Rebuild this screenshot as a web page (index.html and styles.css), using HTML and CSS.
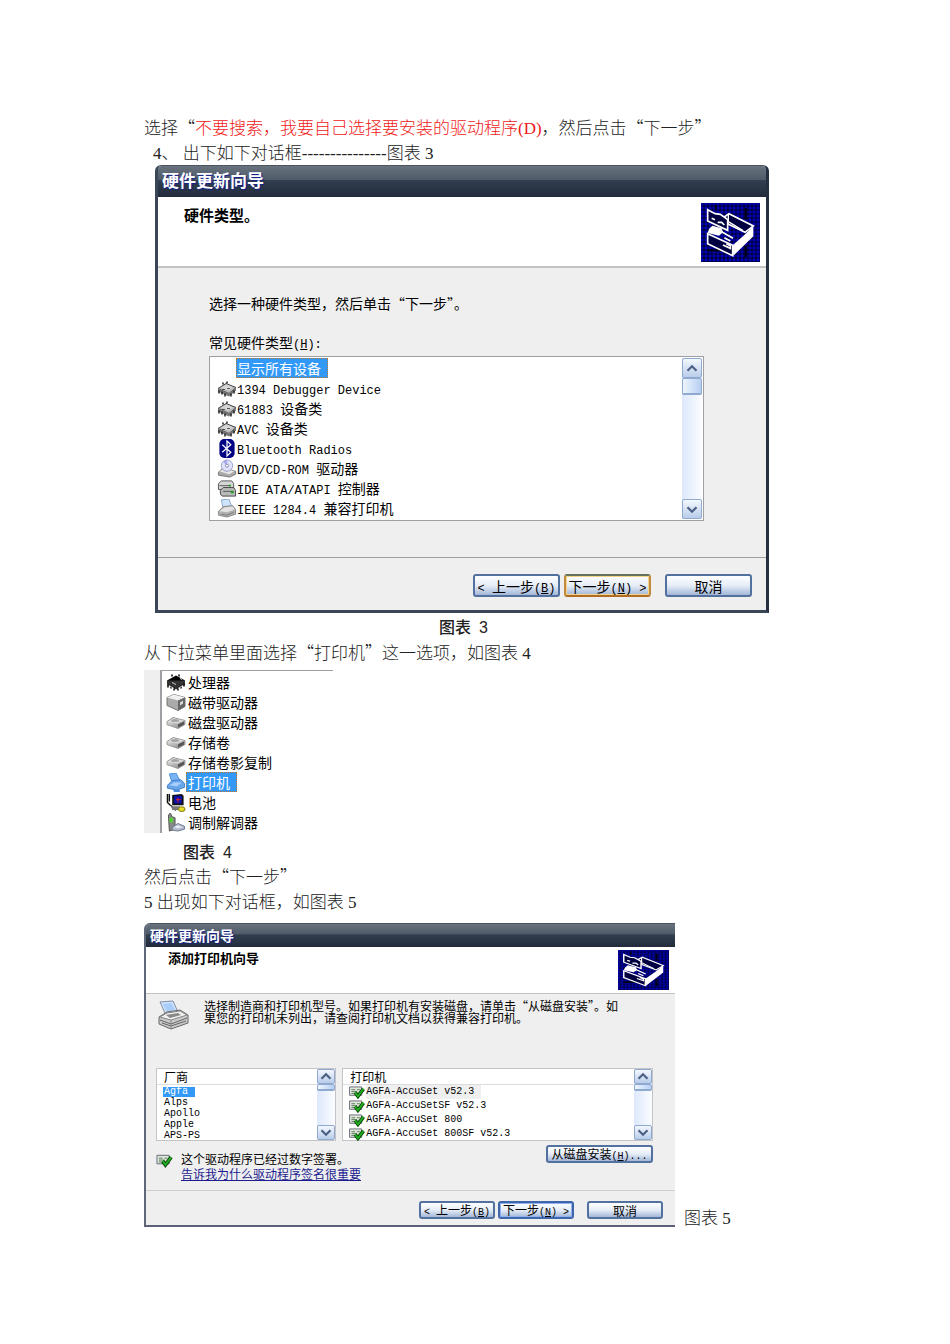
FILE: index.html
```
<!DOCTYPE html>
<html lang="zh-CN">
<head>
  <meta charset="UTF-8" />
  <meta name="viewport" content="width=device-width, initial-scale=1.0">
  <title>打印机驱动安装 – 硬件更新向导</title>
  <link rel="stylesheet" href="styles.css">
</head>
<body>

  <!-- icon sprite -->
  <svg class="sprite" aria-hidden="true">
    <defs>
      <pattern id="dots" width="12" height="12" patternUnits="userSpaceOnUse">
        <rect width="12" height="12" fill="#00007c"/>
        <rect width="6" height="6" fill="#0000b0"/>
        <rect x="6" y="6" width="6" height="6" fill="#00003c"/>
      </pattern>
      <linearGradient id="metal" x1="0" y1="0" x2="1" y2="1">
        <stop offset="0" stop-color="#f4f4f4"/>
        <stop offset="1" stop-color="#7c7c7c"/>
      </linearGradient>
    </defs>

    <symbol id="i-hardware" viewBox="0 0 177 177" preserveAspectRatio="none">
      <rect width="177" height="177" fill="url(#dots)"/>
      <path d="M134 14v36M134 128v34M44 6v12M18 142h46" stroke="#000018" stroke-width="7"/>
      <path d="M70 42 84 32 157 69 132 88 83 64Z" fill="#000040" stroke="#fff" stroke-width="5"/>
      <path d="M82 32V56L125 82" fill="none" stroke="#fff" stroke-width="4"/>
      <path d="M20 20 42 32 58 34 80 50V82L20 54Z" fill="#000040" stroke="#fff" stroke-width="5"/>
      <path d="M32 46 42 50M50 58h12l8 8" stroke="#fff" stroke-width="5" fill="none"/>
      <path d="M34 68 62 76 66 88 54 98 20 90 24 78Z" fill="#fff"/>
      <path d="M20 92 95 127V158L20 122Z" fill="#000040" stroke="#fff" stroke-width="5"/>
      <path d="M95 127 130 96 157 69V100L97 158Z" fill="#fff"/>
      <path d="M58 84 96 106M70 104 88 114M66 126 88 136V128L76 122" stroke="#fff" stroke-width="5" fill="none"/>
    </symbol>

    <symbol id="i-chip" viewBox="0 0 20 18">
      <path d="M1 9 9 4 19 8 12 14Z" fill="#bbb" stroke="#444"/>
      <path d="M4 8 10 5 16 8 11 11Z" fill="#d6d6d6"/>
      <path d="M1 9 12 14 19 8V11L12 17 1 12Z" fill="#777"/>
      <path d="M2 11v3M5 12v3M8 14v3M14 14v3M17 11v3M6 5V3M10 4V2" stroke="#222" stroke-width="1.5"/>
      <path d="M5 10h3M10 9h3" stroke="#555"/>
    </symbol>

    <symbol id="i-bluetooth" viewBox="0 0 20 20">
      <rect x="2" y="0" width="16" height="20" rx="5" fill="#000082"/>
      <path d="M5 6 14 14 10 18V2L14 6 5 14" fill="none" stroke="#fff" stroke-width="1.3"/>
    </symbol>

    <symbol id="i-dvd" viewBox="0 0 20 20">
      <path d="M1 14 6 9 19 13V16L13 19 1 17Z" fill="#aaa" stroke="#777"/>
      <path d="M2 13 7 10 18 13 12 16Z" fill="#e8e8e8"/>
      <ellipse cx="10" cy="7" rx="6" ry="6" fill="#dde2fa" stroke="#9b9fc4"/>
      <path d="M10 7 6 3 10 1Z" fill="#a5a5f0"/>
      <circle cx="10" cy="7" r="1.6" fill="#fff" stroke="#88a"/>
    </symbol>

    <symbol id="i-ide" viewBox="0 0 20 20">
      <path d="M1 5 4 2H15L17 5V11H1Z" fill="#d6d6d6" stroke="#555"/>
      <path d="M3 12 6 9H17L19 12V18H5L3 16Z" fill="#b8bab8" stroke="#444"/>
      <path d="M2 7h12M6 13h11" stroke="#555"/>
      <path d="M12 7h2M14 14h3" stroke="#1aa01a" stroke-width="2"/>
    </symbol>

    <symbol id="i-printer-s" viewBox="0 0 20 20">
      <path d="M4 1 12 0 15 8 6 10Z" fill="#cfe4fc" stroke="#8aa8cc"/>
      <path d="M1 13 6 8 16 7 19 11V16L10 19 1 17Z" fill="#b0b0b0" stroke="#888"/>
      <path d="M2 13 7 9 16 8 18 11 10 14Z" fill="#e2e2e2"/>
      <path d="M4 16 10 17 17 14" fill="none" stroke="#777"/>
    </symbol>

    <symbol id="i-printer-sel" viewBox="0 0 20 20">
      <path d="M3 1 10 0 14 8 6 11Z" fill="#79b4f4" stroke="#4b8edb"/>
      <path d="M1 13 6 8 15 7 19 11V15L11 18 1 16Z" fill="#6aa7ea" stroke="#3c7cc8"/>
      <path d="M3 13 8 10 16 10 11 14Z" fill="#a9d0fb"/>
      <path d="M7 18h7v2H8Z" fill="#4b8edb"/>
    </symbol>

    <symbol id="i-cpu" viewBox="0 0 20 18">
      <path d="M1 7 10 2 19 7 10 13Z" fill="#000"/>
      <path d="M1 7v4l9 5 9-5V7" fill="#333"/>
      <path d="M2 11v3M5 12v3M8 14v3M12 14v3M15 12v3M18 10v3M6 3V1M13 3V1" stroke="#000" stroke-width="1.5"/>
      <path d="M6 9 10 11M14 5l2 1M3 12l5 3M12 15l5-3" stroke="#ccc"/>
    </symbol>

    <symbol id="i-tape" viewBox="0 0 20 18">
      <path d="M1 4 8 1 19 4V13L12 17 1 12Z" fill="#aaa" stroke="#777"/>
      <path d="M1 4 8 1 19 4 12 7Z" fill="#efefef"/>
      <path d="M12 7 19 4V13L12 17Z" fill="#666"/>
      <path d="M14 9 17 7V10L14 12Z" fill="#ddd"/>
    </symbol>

    <symbol id="i-disk" viewBox="0 0 20 18">
      <path d="M1 8 7 4 19 7V11L12 15 1 11Z" fill="url(#metal)" stroke="#999"/>
      <path d="M2 8 8 5 18 7 11 10Z" fill="#ddd"/>
      <path d="M12 11 18 8V11L12 14Z" fill="#555"/>
      <ellipse cx="9" cy="7" rx="4" ry="1.5" fill="#a5a5a5"/>
    </symbol>

    <symbol id="i-battery" viewBox="0 0 20 20">
      <path d="M6 2 16 1 18 3V13H6Z" fill="#111"/>
      <rect x="8" y="3" width="8" height="8" fill="#0a10b0"/>
      <path d="M12 5v5M10 7h5" stroke="#e02020"/>
      <path d="M1 1v9l3 3M3 1v8M4 13c2 0 2 4 6 5" fill="none" stroke="#111" stroke-width="1.5"/>
      <path d="M5 14h9v4H6Z" fill="#777"/>
      <ellipse cx="16" cy="17" rx="3.5" ry="2.5" fill="#e6dc28" stroke="#7a7310"/>
    </symbol>

    <symbol id="i-modem" viewBox="0 0 20 20">
      <path d="M2 2 4 0 6 4 9 5V17L3 19Z" fill="#888" stroke="#555"/>
      <rect x="3" y="5" width="4" height="5" fill="#57d03a"/>
      <path d="M6 15 12 11 19 14V17L12 19 6 18Z" fill="#b4bccc" stroke="#6d7690"/>
      <path d="M8 15 12 13 17 15 12 16Z" fill="#e8edf8"/>
    </symbol>

    <symbol id="i-printer" viewBox="0 0 31 30">
      <path d="M2 2 15 1 20 12 8 15Z" fill="#cfe2fb" stroke="#7f8ea6"/>
      <path d="M5 4 13 3 17 10 9 12Z" fill="#a9cdf8"/>
      <path d="M1 17 9 12 22 10 30 15V23L13 29 1 24Z" fill="#c9c9c9" stroke="#666"/>
      <path d="M2 17 9 13 22 11 29 15 13 20Z" fill="#f2f2f2" stroke="#888"/>
      <path d="M8 15 20 13 23 15 12 18Z" fill="#888"/>
      <path d="M2 20 13 24 29 18M4 23 13 26 28 21" fill="none" stroke="#666"/>
      <path d="M13 20V28" stroke="#888"/>
    </symbol>

    <symbol id="i-signed" viewBox="0 0 18 14">
      <path d="M1 1H14V10H1Z" fill="#dfe6da" stroke="#667"/>
      <path d="M3 4h4M3 6h6M3 8h3M9 4h3" stroke="#5b7a5b"/>
      <path d="M7 7 10 11 16 3" fill="none" stroke="#0a4c0a" stroke-width="4"/>
      <path d="M7 7 10 11 16 3" fill="none" stroke="#22b022" stroke-width="2"/>
    </symbol>

    <symbol id="i-up" viewBox="0 0 10 8">
      <path d="M1 6 5 2 9 6" fill="none" stroke="#4d6185" stroke-width="2"/>
    </symbol>
    <symbol id="i-down" viewBox="0 0 10 8">
      <path d="M1 2 5 6 9 2" fill="none" stroke="#4d6185" stroke-width="2"/>
    </symbol>
  </svg>

  <main class="page">
    <p>选择“<span class="red">不要搜索，我要自己选择要安装的驱动程序<span class="latin">(D)</span></span>，然后点击“下一步”</p>
    <p class="step"><span class="latin">4</span>、<span class="latin"> </span>出下如下对话框<span class="latin">---------------</span>图表<span class="latin"> 3</span></p>

    <section class="wizard">
      <h2 class="titlebar">硬件更新向导</h2>
      <header class="banner">
        <h3>硬件类型。</h3>
        <svg class="hardware"><use href="#i-hardware"/></svg>
      </header>
      <div class="content">
        <p class="prompt">选择一种硬件类型，然后单击“下一步”。</p>
        <p class="list-label" id="typeLabel">常见硬件类型<span class="mono">(<u>H</u>):</span></p>
        <div class="listbox">
          <ul class="devices" role="listbox" aria-labelledby="typeLabel">
            <li class="selected"><span class="name">显示所有设备</span></li>
            <li><svg><use href="#i-chip"/></svg><span class="name"><span class="mono">1394 Debugger Device</span></span></li>
            <li><svg><use href="#i-chip"/></svg><span class="name"><span class="mono">61883 </span>设备类</span></li>
            <li><svg><use href="#i-chip"/></svg><span class="name"><span class="mono">AVC </span>设备类</span></li>
            <li><svg><use href="#i-bluetooth"/></svg><span class="name"><span class="mono">Bluetooth Radios</span></span></li>
            <li><svg><use href="#i-dvd"/></svg><span class="name"><span class="mono">DVD/CD-ROM </span>驱动器</span></li>
            <li><svg><use href="#i-ide"/></svg><span class="name"><span class="mono">IDE ATA/ATAPI </span>控制器</span></li>
            <li><svg><use href="#i-printer-s"/></svg><span class="name"><span class="mono">IEEE 1284.4 </span>兼容打印机</span></li>
          </ul>
          <div class="scrollbar">
            <button class="arrow" aria-label="向上"><svg><use href="#i-up"/></svg></button>
            <div class="thumb"></div>
            <button class="arrow last" aria-label="向下"><svg><use href="#i-down"/></svg></button>
          </div>
        </div>
      </div>
      <footer class="actions">
        <button class="btn"><span class="mono">&lt; </span>上一步<span class="mono">(<u>B</u>)</span></button>
        <button class="btn hot">下一步<span class="mono">(<u>N</u>) &gt;</span></button>
        <button class="btn cancel">取消</button>
      </footer>
    </section>
    <p class="caption center">图表<span class="num">3</span></p>

    <p>从下拉菜单里面选择“打印机”这一选项，如图表<span class="latin"> 4</span></p>

    <div class="excerpt">
      <ul class="devices">
        <li><svg><use href="#i-cpu"/></svg><span class="name">处理器</span></li>
        <li><svg><use href="#i-tape"/></svg><span class="name">磁带驱动器</span></li>
        <li><svg><use href="#i-disk"/></svg><span class="name">磁盘驱动器</span></li>
        <li><svg><use href="#i-disk"/></svg><span class="name">存储卷</span></li>
        <li><svg><use href="#i-disk"/></svg><span class="name">存储卷影复制</span></li>
        <li class="selected"><svg><use href="#i-printer-sel"/></svg><span class="name">打印机</span></li>
        <li><svg><use href="#i-battery"/></svg><span class="name">电池</span></li>
        <li><svg><use href="#i-modem"/></svg><span class="name">调制解调器</span></li>
      </ul>
    </div>
    <p class="caption indent">图表<span class="num">4</span></p>

    <p>然后点击“下一步”</p>
    <p><span class="latin">5 </span>出现如下对话框，如图表<span class="latin"> 5</span></p>

    <div class="figure">
      <section class="wizard small">
        <h2 class="titlebar">硬件更新向导</h2>
        <header class="banner">
          <h3>添加打印机向导</h3>
          <svg class="hardware"><use href="#i-hardware"/></svg>
        </header>
        <div class="content">
          <div class="intro">
            <svg><use href="#i-printer"/></svg>
            <p>选择制造商和打印机型号。如果打印机有安装磁盘，请单击“从磁盘安装”。如<br>果您的打印机未列出，请查阅打印机文档以获得兼容打印机。</p>
          </div>
          <div class="lists">
            <div class="listbox makers">
              <div class="column">
                <h4>厂商</h4>
                <ul>
                  <li class="selected"><span class="name">Agfa</span></li>
                  <li><span class="name">Alps</span></li>
                  <li><span class="name">Apollo</span></li>
                  <li><span class="name">Apple</span></li>
                  <li><span class="name">APS-PS</span></li>
                </ul>
              </div>
              <div class="scrollbar">
                <button class="arrow" aria-label="向上"><svg><use href="#i-up"/></svg></button>
                <div class="thumb"></div>
                <button class="arrow last" aria-label="向下"><svg><use href="#i-down"/></svg></button>
              </div>
            </div>
            <div class="listbox models">
              <div class="column">
                <h4>打印机</h4>
                <ul>
                  <li class="current"><svg><use href="#i-signed"/></svg><span class="name">AGFA-AccuSet v52.3</span></li>
                  <li><svg><use href="#i-signed"/></svg><span class="name">AGFA-AccuSetSF v52.3</span></li>
                  <li><svg><use href="#i-signed"/></svg><span class="name">AGFA-AccuSet 800</span></li>
                  <li><svg><use href="#i-signed"/></svg><span class="name">AGFA-AccuSet 800SF v52.3</span></li>
                </ul>
              </div>
              <div class="scrollbar">
                <button class="arrow" aria-label="向上"><svg><use href="#i-up"/></svg></button>
                <div class="thumb"></div>
                <button class="arrow last" aria-label="向下"><svg><use href="#i-down"/></svg></button>
              </div>
            </div>
          </div>
          <div class="signature">
            <svg><use href="#i-signed"/></svg>
            <div class="notice">
              <p>这个驱动程序已经过数字签署。</p>
              <a href="#">告诉我为什么驱动程序签名很重要</a>
            </div>
            <button class="btn disk">从磁盘安装<span class="mono">(<u>H</u>)...</span></button>
          </div>
        </div>
        <footer class="actions">
          <button class="btn"><span class="mono">&lt; </span>上一步<span class="mono">(<u>B</u>)</span></button>
          <button class="btn focus">下一步<span class="mono">(<u>N</u>) &gt;</span></button>
          <button class="btn cancel">取消</button>
        </footer>
      </section>
      <p class="side">图表<span class="latin"> 5</span></p>
    </div>
  </main>

</body>
</html>
```
FILE: styles.css
```
* {
  box-sizing: border-box;
}

body, p, h2, h3, h4, ul {
  margin: 0;
  padding: 0;
}

body {
  background: #fff;
  color: #222;
  font-family: 'Noto Sans CJK SC', sans-serif;
}

ul { list-style: none; }

.sprite {
  position: absolute;
  width: 0;
  height: 0;
}

.page {
  padding: 114px 144px;
  font-size: 17px;
  font-weight: 300;
  line-height: 25px;
}

.page p { white-space: nowrap; }

.latin {
  font-family: 'Liberation Serif', serif;
  line-height: 1;
  white-space: pre;
}

.mono {
  font-family: 'Liberation Mono', monospace;
  font-size: 12px;
  line-height: 1;
  white-space: pre;
}

.red { color: #f01818; }
.step { padding-left: 9px; }

/* wizard window */

.wizard {
  width: 100%;
  max-width: 614px;
  margin-top: 1px;
  margin-left: 11px;
  border: 3px solid #3a4656;
  border-top: 1px solid #4a5561;
  border-right-color: #262f40;
  border-radius: 6px 6px 0 0;
  background: #efefef;
  color: #000;
  font-size: 14px;
  font-weight: 400;
  line-height: 20px;
}

.titlebar {
  height: 31px;
  padding-left: 4px;
  border-radius: 4px 4px 0 0;
  background: linear-gradient(#68737e, #4e5a68 45%, #323f50 46%, #222b3b);
  color: #fff;
  font-size: 17px;
  line-height: 28px;
  text-shadow: 1px 1px 1px #10208c;
}

.banner {
  display: flex;
  justify-content: space-between;
  height: 71px;
  padding: 6px 6px 0 26px;
  border-bottom: 2px solid #c2c2c4;
  background: #fff;
}

.banner h3 {
  padding-top: 2px;
  font-size: 15px;
}

.hardware {
  width: 59px;
  height: 59px;
}

.content { padding: 25px 62px 36px 51px; }

.list-label { margin: 19px 0 4px; }

.listbox {
  display: flex;
  border: 1px solid #a0a0a4;
  background: #fff;
}

.content > .listbox {
  height: 165px;
  padding: 1px;
}

.devices { flex: 1; }

.devices li {
  display: flex;
  align-items: center;
  height: 20px;
  padding-left: 6px;
  white-space: nowrap;
}

.devices svg {
  width: 20px;
  height: 19px;
}

.listbox .selected { padding-left: 25px; }

.selected .name {
  padding: 0 7px 0 1px;
  outline: 1px dotted #c07828;
  outline-offset: -1px;
  background: #3399f8;
  color: #fff;
}

.scrollbar {
  display: flex;
  flex-direction: column;
  width: 20px;
  background: linear-gradient(90deg, #dce8fc, #fbfcff);
}

.arrow {
  display: flex;
  align-items: center;
  justify-content: center;
  height: 20px;
  padding: 0;
  border: 1px solid #8fa9cf;
  border-radius: 2px;
  background: linear-gradient(#f4f8ff, #b8cdea);
}

.arrow svg {
  width: 12px;
  height: 9px;
}

.arrow.last { margin-top: auto; }

.thumb {
  height: 17px;
  border: 1px solid #8fa9cf;
  border-bottom-width: 2px;
  border-radius: 2px;
  background: linear-gradient(90deg, #eef5ff, #b6cff2);
}

.actions {
  display: flex;
  justify-content: flex-end;
  gap: 4px;
  height: 53px;
  padding: 16px 14px 0 0;
  border-top: 1px solid #a0a0a2;
}

.btn {
  width: 87px;
  height: 23px;
  padding: 0;
  border: 2px solid #52719f;
  border-radius: 3px;
  background: linear-gradient(#fdfeff, #e6edf7 50%, #a3b7d8);
  color: #000;
  font-family: inherit;
  font-size: 14px;
  line-height: 18px;
  white-space: nowrap;
}

.btn.hot {
  border-color: #66725e #c48a3c #b06c20;
  box-shadow: inset 0 0 0 1px #f5d48c;
}

.btn.focus { border-color: #3f66ac; box-shadow: inset 0 0 0 1px #8fb0ea; }
.btn.cancel { margin-left: 10px; }

/* figure captions */

.caption {
  height: 26px;
  color: #222;
  font-size: 16px;
  font-weight: 500;
  line-height: 26px;
}

.caption .num {
  margin-left: 8px;
  font-family: 'Liberation Sans', sans-serif;
  line-height: 1;
}

.center { padding-left: 295px; }

.indent {
  height: 25px;
  margin-top: 5px;
  padding-left: 39px;
}

.excerpt {
  width: 189px;
  height: 163px;
  margin-top: 6px;
  border-left: 16px solid #efefef;
  color: #000;
  font-size: 14px;
  font-weight: 400;
  line-height: 20px;
}

.excerpt .devices {
  height: 163px;
  padding-top: 1px;
  border-top: 1px solid #a0a0a4;
  border-left: 2px solid #a0a0a4;
}

.excerpt .devices li { padding-left: 4px; }
.excerpt .name { padding-left: 2px; }

/* second wizard, pasted in at a smaller scale */

.figure {
  display: flex;
  align-items: flex-end;
  gap: 9px;
  margin-top: 9px;
}

.side { line-height: 14px; }

.small {
  max-width: 531px;
  margin-left: 0;
  border-width: 1px 0 2px 2px;
  border-color: #4a5561 #4a5561 #5a6078 #5f6878;
  border-radius: 6px 0 0 0;
  font-size: 12px;
  line-height: 12px;
}

.small .mono { font-size: 10px; }

.small .titlebar {
  height: 23px;
  border-radius: 4px 0 0 0;
  font-size: 14px;
  line-height: 22px;
}

.small .banner {
  height: 47px;
  padding: 3px 6px 0 22px;
  border-width: 1px;
}

.small .banner h3 {
  font-size: 13px;
  line-height: 12px;
}

.small .hardware {
  width: 51px;
  height: 40px;
}

.small .content { padding: 6px 22px 0 10px; }

.intro {
  display: flex;
  gap: 15px;
  height: 68px;
  padding-left: 2px;
}

.intro svg {
  width: 31px;
  height: 30px;
}

.lists {
  display: flex;
  gap: 6px;
}

.lists .listbox {
  height: 73px;
  border-color: #c4c4c8;
}

.makers { flex: 180; }
.models { flex: 312; }

.column { flex: 1; }

.column h4 {
  height: 16px;
  padding-left: 7px;
  border-bottom: 1px solid #dcdcdc;
  font-size: 12px;
  font-weight: 400;
  line-height: 16px;
}

.column li {
  display: flex;
  align-items: center;
  font-family: 'Liberation Mono', monospace;
  font-size: 10px;
  line-height: 10px;
  white-space: nowrap;
}

.makers ul { padding-top: 1px; }
.makers li { height: 11px; padding-left: 7px; }
.makers .selected { padding-left: 6px; }

.makers .selected .name { outline: none; }

.models li { height: 14px; padding-left: 5px; }

.models li svg {
  width: 18px;
  height: 13px;
}

.current .name {
  padding: 2px 7px 2px 0;
  background: #efefef;
}

.small .scrollbar { width: 18px; }
.small .arrow { height: 15px; }
.small .thumb { height: 7px; }

.signature {
  display: flex;
  gap: 8px;
  height: 49px;
  padding-top: 4px;
}

.signature svg {
  width: 17px;
  height: 14px;
  margin-top: 9px;
}

.notice {
  flex: 1;
  padding-top: 6px;
  line-height: 15px;
}

.notice p { line-height: 15px; }

.notice a { color: #1c1c90; }

.small .actions {
  gap: 3px;
  height: 35px;
  padding: 10px 12px 0 0;
  border-color: #cfcfcf;
}

.small .btn {
  width: 76px;
  height: 18px;
  font-size: 12px;
  line-height: 13px;
}

.small .disk { width: 107px; }
```
